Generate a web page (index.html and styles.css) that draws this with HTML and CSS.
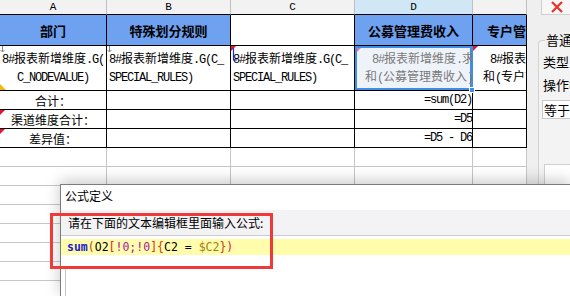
FILE: index.html
```html
<!DOCTYPE html>
<html lang="zh">
<head>
<meta charset="utf-8">
<title>公式定义</title>
<link rel="stylesheet" href="styles.css">
</head>
<body>
<div class="sheet">
  <div class="cell col">A</div>
  <div class="cell col">B</div>
  <div class="cell col">C</div>
  <div class="cell col sel">D</div>
  <div class="cell col"></div>

  <div class="cell k hd">部门</div>
  <div class="cell k hd">特殊划分规则</div>
  <div class="cell k hd blank"></div>
  <div class="cell k hd">公募管理费收入</div>
  <div class="cell k hd clip">专户管理费收入</div>

  <div class="cell k txt center dn yel">
    <svg class="arrow" width="5" height="7" viewBox="0 0 5 7"><path d="M2.5 0V6M0.5 4L2.5 6L4.5 4" fill="none" stroke="#8a8a8a" stroke-width="1"/></svg>
    <div><span class="a">8#</span>报表新增维度<span class="a">.G(</span></div>
    <div><span class="a">C_NODEVALUE)</span></div>
  </div>
  <div class="cell k txt pl dn">
    <svg class="arrow" width="5" height="7" viewBox="0 0 5 7"><path d="M2.5 0V6M0.5 4L2.5 6L4.5 4" fill="none" stroke="#8a8a8a" stroke-width="1"/></svg>
    <div><span class="a">8#</span>报表新增维度<span class="a">.G(C_</span></div>
    <div><span class="a">SPECIAL_RULES)</span></div>
  </div>
  <div class="cell k txt pl cm">
    <svg class="tick" width="6" height="14" viewBox="0 0 6 14"><path d="M1.5 1V13H5" fill="none" stroke="#1030e0" stroke-width="1.2"/></svg>
    <div><span class="a">8#</span>报表新增维度<span class="a">.G(C_</span></div>
    <div><span class="a">SPECIAL_RULES)</span></div>
  </div>
  <div class="cell k txt agg active cm pink">
    <div class="l1"><span class="a">8#</span>报表新增维度<span class="a">.</span>求</div>
    <div class="l2">和<span class="a">(</span>公募管理费收入<span class="a">)</span></div>
  </div>
  <div class="cell k txt agg cm">
    <div class="l1"><span class="a">8#</span>报表新增维度</div>
    <div class="l2">和<span class="a">(</span>专户管理费收入<span class="a">)</span></div>
  </div>

  <div class="cell k lab">合计：</div>
  <div class="cell k"></div>
  <div class="cell k"></div>
  <div class="cell k fx"><span class="a">=sum(D2)</span></div>
  <div class="cell k"></div>

  <div class="cell k lab cm">渠道维度合计：</div>
  <div class="cell k"></div>
  <div class="cell k"></div>
  <div class="cell k fx"><span class="a">=D5</span></div>
  <div class="cell k"></div>

  <div class="cell k lab cm">差异值：</div>
  <div class="cell k"></div>
  <div class="cell k"></div>
  <div class="cell k fx"><span class="a">=D5 - D6</span></div>
  <div class="cell k"></div>

  <div class="cell"></div><div class="cell"></div><div class="cell"></div><div class="cell"></div><div class="cell"></div>
  <div class="cell"></div><div class="cell"></div><div class="cell"></div><div class="cell"></div><div class="cell"></div>
  <div class="cell"></div><div class="cell"></div><div class="cell"></div><div class="cell"></div><div class="cell"></div>
  <div class="cell"></div><div class="cell"></div><div class="cell"></div><div class="cell"></div><div class="cell"></div>
  <div class="cell"></div><div class="cell"></div><div class="cell"></div><div class="cell"></div><div class="cell"></div>
  <div class="cell"></div><div class="cell"></div><div class="cell"></div><div class="cell"></div><div class="cell"></div>
  <div class="cell"></div><div class="cell"></div><div class="cell"></div><div class="cell"></div><div class="cell"></div>
</div>

<div class="panel">
  <div class="close">
    <svg width="12" height="12" viewBox="0 0 12 12"><path d="M1 1L11 11M11 1L1 11" stroke="#e8322a" stroke-width="2.2" fill="none"/></svg>
  </div>
  <div class="group">
    <div class="gt">普通过滤</div>
    <div class="gl">类型<span class="req">：</span></div>
    <div class="gl op">操作符</div>
    <div class="inp">等于</div>
    <div class="box"></div>
  </div>
</div>

<div class="handle"></div>

<div class="dialog">
  <div class="dtitle">公式定义</div>
  <div class="dlabel">请在下面的文本编辑框里面输入公式:</div>
  <div class="editor">
    <div class="line"><span class="kw">sum</span><span class="p1">(</span>O2<span class="br">[</span><span class="pp">!0;!0</span><span class="br">]</span><span class="p1">{</span>C2 = <span class="dl">$C2</span><span class="p1">}</span><span class="p2">)</span></div>
    <div class="rest"></div>
  </div>
</div>

<div class="mark"></div>
</body>
</html>
```
FILE: styles.css
```css
* { box-sizing: border-box; }
html, body { margin: 0; padding: 0; }
body {
  width: 570px;
  height: 296px;
  overflow: hidden;
  position: relative;
  display: flex;
  background: #fff;
  color: #000;
  font-family: "Noto Sans CJK SC", "Noto Sans", sans-serif;
}

.sheet {
  flex: none;
  width: 527px;
  display: grid;
  grid-template-columns: 107px 124px 124px 118px 54px;
  grid-template-rows: 15px 31px 45px;
  grid-auto-rows: 19px;
}
.cell {
  position: relative;
  overflow: hidden;
  white-space: nowrap;
  border-right: 1px solid #c6c6c6;
  border-bottom: 1px solid #c6c6c6;
  font-size: 12px;
}
.k { border-right-color: #000; border-bottom-color: #000; }

.a {
  font-family: "Liberation Mono", monospace;
  font-size: 12px;
  letter-spacing: -1.2px;
}

.col {
  background: #f2f2f2;
  border-right-color: #c0c0c0;
  border-bottom-color: #000;
  font-family: "Liberation Mono", monospace;
  font-size: 11px;
  line-height: 1;
  display: flex;
  align-items: center;
  justify-content: center;
}
.col.sel { background: #d0e8f6; }

.hd {
  background: #6ea1f0;
  font-weight: bold;
  font-size: 13px;
  display: flex;
  align-items: center;
  justify-content: center;
}
.hd.blank { background: #fff; }
.hd.clip { justify-content: flex-start; padding-left: 14px; }

.txt {
  display: flex;
  flex-direction: column;
  justify-content: center;
  line-height: 15px;
}
.txt.center { align-items: center; }
.txt.pl { padding-left: 2px; }
.agg .l1 { padding-left: 17px; }
.agg .l2 { padding-left: 10px; }
.active {
  background: #eef3fa;
  color: #7a7a7a;
  box-shadow: inset 0 0 0 2px #3f8ee4;
  border-right-color: #3f8ee4;
}

.arrow { position: absolute; left: 0; top: 0; }
.tick { position: absolute; left: 1px; top: 1px; }

.yel::after {
  content: "";
  position: absolute;
  left: 0;
  bottom: 0;
  border-bottom: 6px solid #f2b807;
  border-right: 6px solid transparent;
}
.cm::before {
  content: "";
  position: absolute;
  left: 0;
  top: 0;
  border-top: 5px solid #e8102a;
  border-right: 5px solid transparent;
}
.pink::before { border-top-color: #f07896; left: 2px; top: 2px; border-top-width: 4px; border-right-width: 4px; }

.lab {
  display: flex;
  align-items: center;
  justify-content: center;
  font-size: 12px;
}
.fx {
  display: flex;
  align-items: center;
  justify-content: flex-end;
  padding-right: 0;
}

.handle {
  position: absolute;
  left: 469px;
  top: 87px;
  width: 6px;
  height: 6px;
  background: #3f8ee4;
  border: 1px solid #fff;
}

.panel {
  flex: none;
  width: 43px;
  background: #efefef;
  display: flex;
  flex-direction: column;
  font-size: 13px;
  overflow: hidden;
}
.close {
  margin-left: 14px;
  height: 15px;
  width: 40px;
  background: #f7f7f7;
  border: 1px solid #cfcfcf;
  border-top: none;
  padding: 1px 0 0 9px;
  line-height: 0;
}
.group {
  margin: 25px 0 0 11px;
  flex: 1;
  border-left: 1px solid #d3d3d3;
  border-top: 1px solid #d3d3d3;
  border-top-left-radius: 4px;
  background: #f3f3f3;
  display: flex;
  flex-direction: column;
}
.gt {
  margin-top: -9px;
  margin-left: 6px;
  height: 15px;
  line-height: 15px;
  background: #efefef;
  white-space: nowrap;
  padding-left: 1px;
  overflow: hidden;
}
.gl {
  margin-top: 7px;
  padding-left: 4px;
  height: 15px;
  line-height: 15px;
  white-space: nowrap;
  overflow: hidden;
}
.req { color: #d04020; }
.op { margin-top: 8px; }
.inp {
  margin: 8px 0 0 3px;
  height: 19px;
  background: #fff;
  border: 1px solid #c8c8c8;
  border-right: none;
  line-height: 17px;
  padding-left: 1px;
  white-space: nowrap;
  overflow: hidden;
}
.box {
  margin: 45px 0 0 5px;
  flex: 1;
  background: #fff;
  border: 1px solid #d0d0d0;
  border-right: none;
}

.dialog {
  position: absolute;
  left: 60px;
  top: 184px;
  right: 0;
  bottom: 0;
  background: #fff;
  border-left: 1px solid #7c7c7c;
  border-top: 1px solid #7c7c7c;
  box-shadow: 0 -3px 14px rgba(0, 0, 0, 0.22);
  display: flex;
  flex-direction: column;
}
.dtitle {
  height: 25px;
  line-height: 22px;
  padding-left: 4px;
  font-size: 12px;
}
.dlabel {
  height: 26px;
  line-height: 25px;
  background: #f3f3f5;
  border-bottom: 1px solid #cbcbcb;
  padding-left: 7px;
  font-size: 12px;
}
.editor {
  flex: 1;
  padding-top: 3px;
  display: flex;
  flex-direction: column;
}
.line {
  height: 16px;
  line-height: 16px;
  background: #fffdab;
  padding-left: 6px;
  font-family: "DejaVu Sans Mono", monospace;
  font-size: 11.5px;
  white-space: pre;
}
.kw { color: #2020c8; font-weight: bold; }
.p1 { color: #c84020; }
.p2 { color: #d82050; }
.br { color: #e02828; }
.pp { color: #a0209f; }
.dl { color: #a08010; }
.rest {
  flex: 1;
  margin: 11px 0 0 4px;
  border-left: 1px solid #c8c8c8;
}

.mark {
  position: absolute;
  left: 50px;
  top: 213px;
  width: 223px;
  height: 56px;
  border: 3px solid #ef3a3a;
}
```
